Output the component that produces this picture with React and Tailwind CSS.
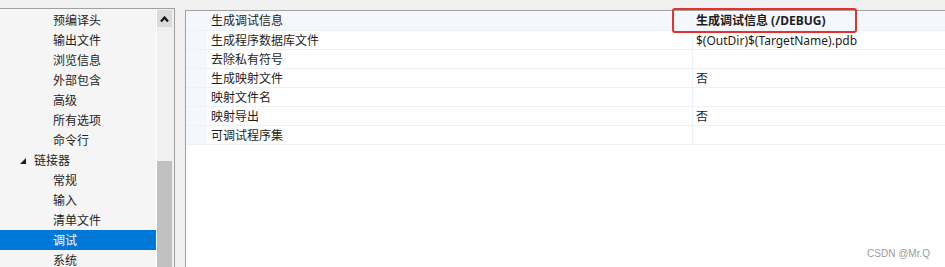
import React from 'react';

const treeItems = [
  { label: '预编译头', level: 2 },
  { label: '输出文件', level: 2 },
  { label: '浏览信息', level: 2 },
  { label: '外部包含', level: 2 },
  { label: '高级', level: 2 },
  { label: '所有选项', level: 2 },
  { label: '命令行', level: 2 },
  { label: '链接器', level: 1, expanded: true },
  { label: '常规', level: 2 },
  { label: '输入', level: 2 },
  { label: '清单文件', level: 2 },
  { label: '调试', level: 2, selected: true },
  { label: '系统', level: 2 },
];

const props = [
  { name: '生成调试信息', value: '生成调试信息 (/DEBUG)', bold: true, current: true },
  { name: '生成程序数据库文件', value: '$(OutDir)$(TargetName).pdb' },
  { name: '去除私有符号', value: '' },
  { name: '生成映射文件', value: '否' },
  { name: '映射文件名', value: '' },
  { name: '映射导出', value: '否' },
  { name: '可调试程序集', value: '' },
];

function TreeRow({ item }) {
  return (
    <div
      className={`h-[20px] flex items-center whitespace-nowrap pt-px ${
        item.selected ? 'bg-[#0078d7] text-white' : 'text-[#1e1e1e]'
      }`}
    >
      {item.level === 1 ? (
        <>
          <span className="w-[34px] flex justify-end pr-[8px]">
            <svg width="6" height="6" viewBox="0 0 6 6">
              <polygon points="6,0 6,6 0,6" fill="#1e1e1e" />
            </svg>
          </span>
          <span>{item.label}</span>
        </>
      ) : (
        <span className="pl-[53px]">{item.label}</span>
      )}
    </div>
  );
}

export default function App() {
  return (
    <div
      className="relative w-[945px] h-[267px] bg-[#f0f0f0] flex overflow-hidden text-[12px] leading-[20px]"
      style={{ fontFamily: '"Noto Sans", "Noto Sans CJK SC", sans-serif' }}
    >
      {/* tree panel */}
      <div className="mt-[8px] w-[175px] shrink-0 border-t border-r border-[#a0a0a0] bg-[#f5f5f5] flex">
        <div className="w-[156px] shrink-0 pt-px">
          {treeItems.map((item) => (
            <TreeRow key={item.label} item={item} />
          ))}
        </div>
        <div className="w-px bg-white" />
        <div className="w-[17px] bg-[#f0f0f0] flex flex-col pt-px">
          <div className="w-[15px] h-[17px] bg-[#dadada] flex items-center justify-center">
            <svg width="9" height="6" viewBox="0 0 9 6">
              <polyline points="1,5.5 4.5,1.5 8,5.5" fill="none" stroke="#111" strokeWidth="2.2" />
            </svg>
          </div>
          <div className="flex-1" />
          <div className="w-[15px] h-[106px] bg-[#c0c0c0]" />
        </div>
      </div>

      {/* property grid */}
      <div className="mt-[10px] ml-[10px] flex-1 border-t border-l border-[#a0a0a0] bg-white">
        {props.map((p, i) => (
          <div
            key={p.name}
            className={`flex border-b border-[#eef2f8] leading-[19px] ${i === 0 ? 'h-[20px]' : 'h-[19px]'} ${
              p.current ? 'bg-[#f4f7fc]' : ''
            }`}
          >
            <div className="w-[21px] shrink-0 bg-[#f4f7fc]" />
            <div className="w-[485px] shrink-0 pl-[4px] text-[#1e1e1e] whitespace-nowrap">{p.name}</div>
            <div
              className={`flex-1 border-l border-[#eef2f8] pl-[3px] text-[#1e1e1e] whitespace-nowrap ${
                p.bold ? 'font-bold' : ''
              }`}
            >
              {p.value}
            </div>
          </div>
        ))}
      </div>

      {/* annotation box */}
      <div className="absolute left-[672px] top-[8px] w-[185px] h-[25px] border-2 border-[#e8302e] rounded-[3px]" />

      {/* watermark */}
      <div
        className="absolute right-[15px] bottom-[7px] text-[10px] leading-[12px] text-[#9a9a9a]"
        style={{ fontFamily: '"Liberation Sans", Arial, sans-serif' }}
      >
        CSDN @Mr.Q
      </div>
    </div>
  );
}
